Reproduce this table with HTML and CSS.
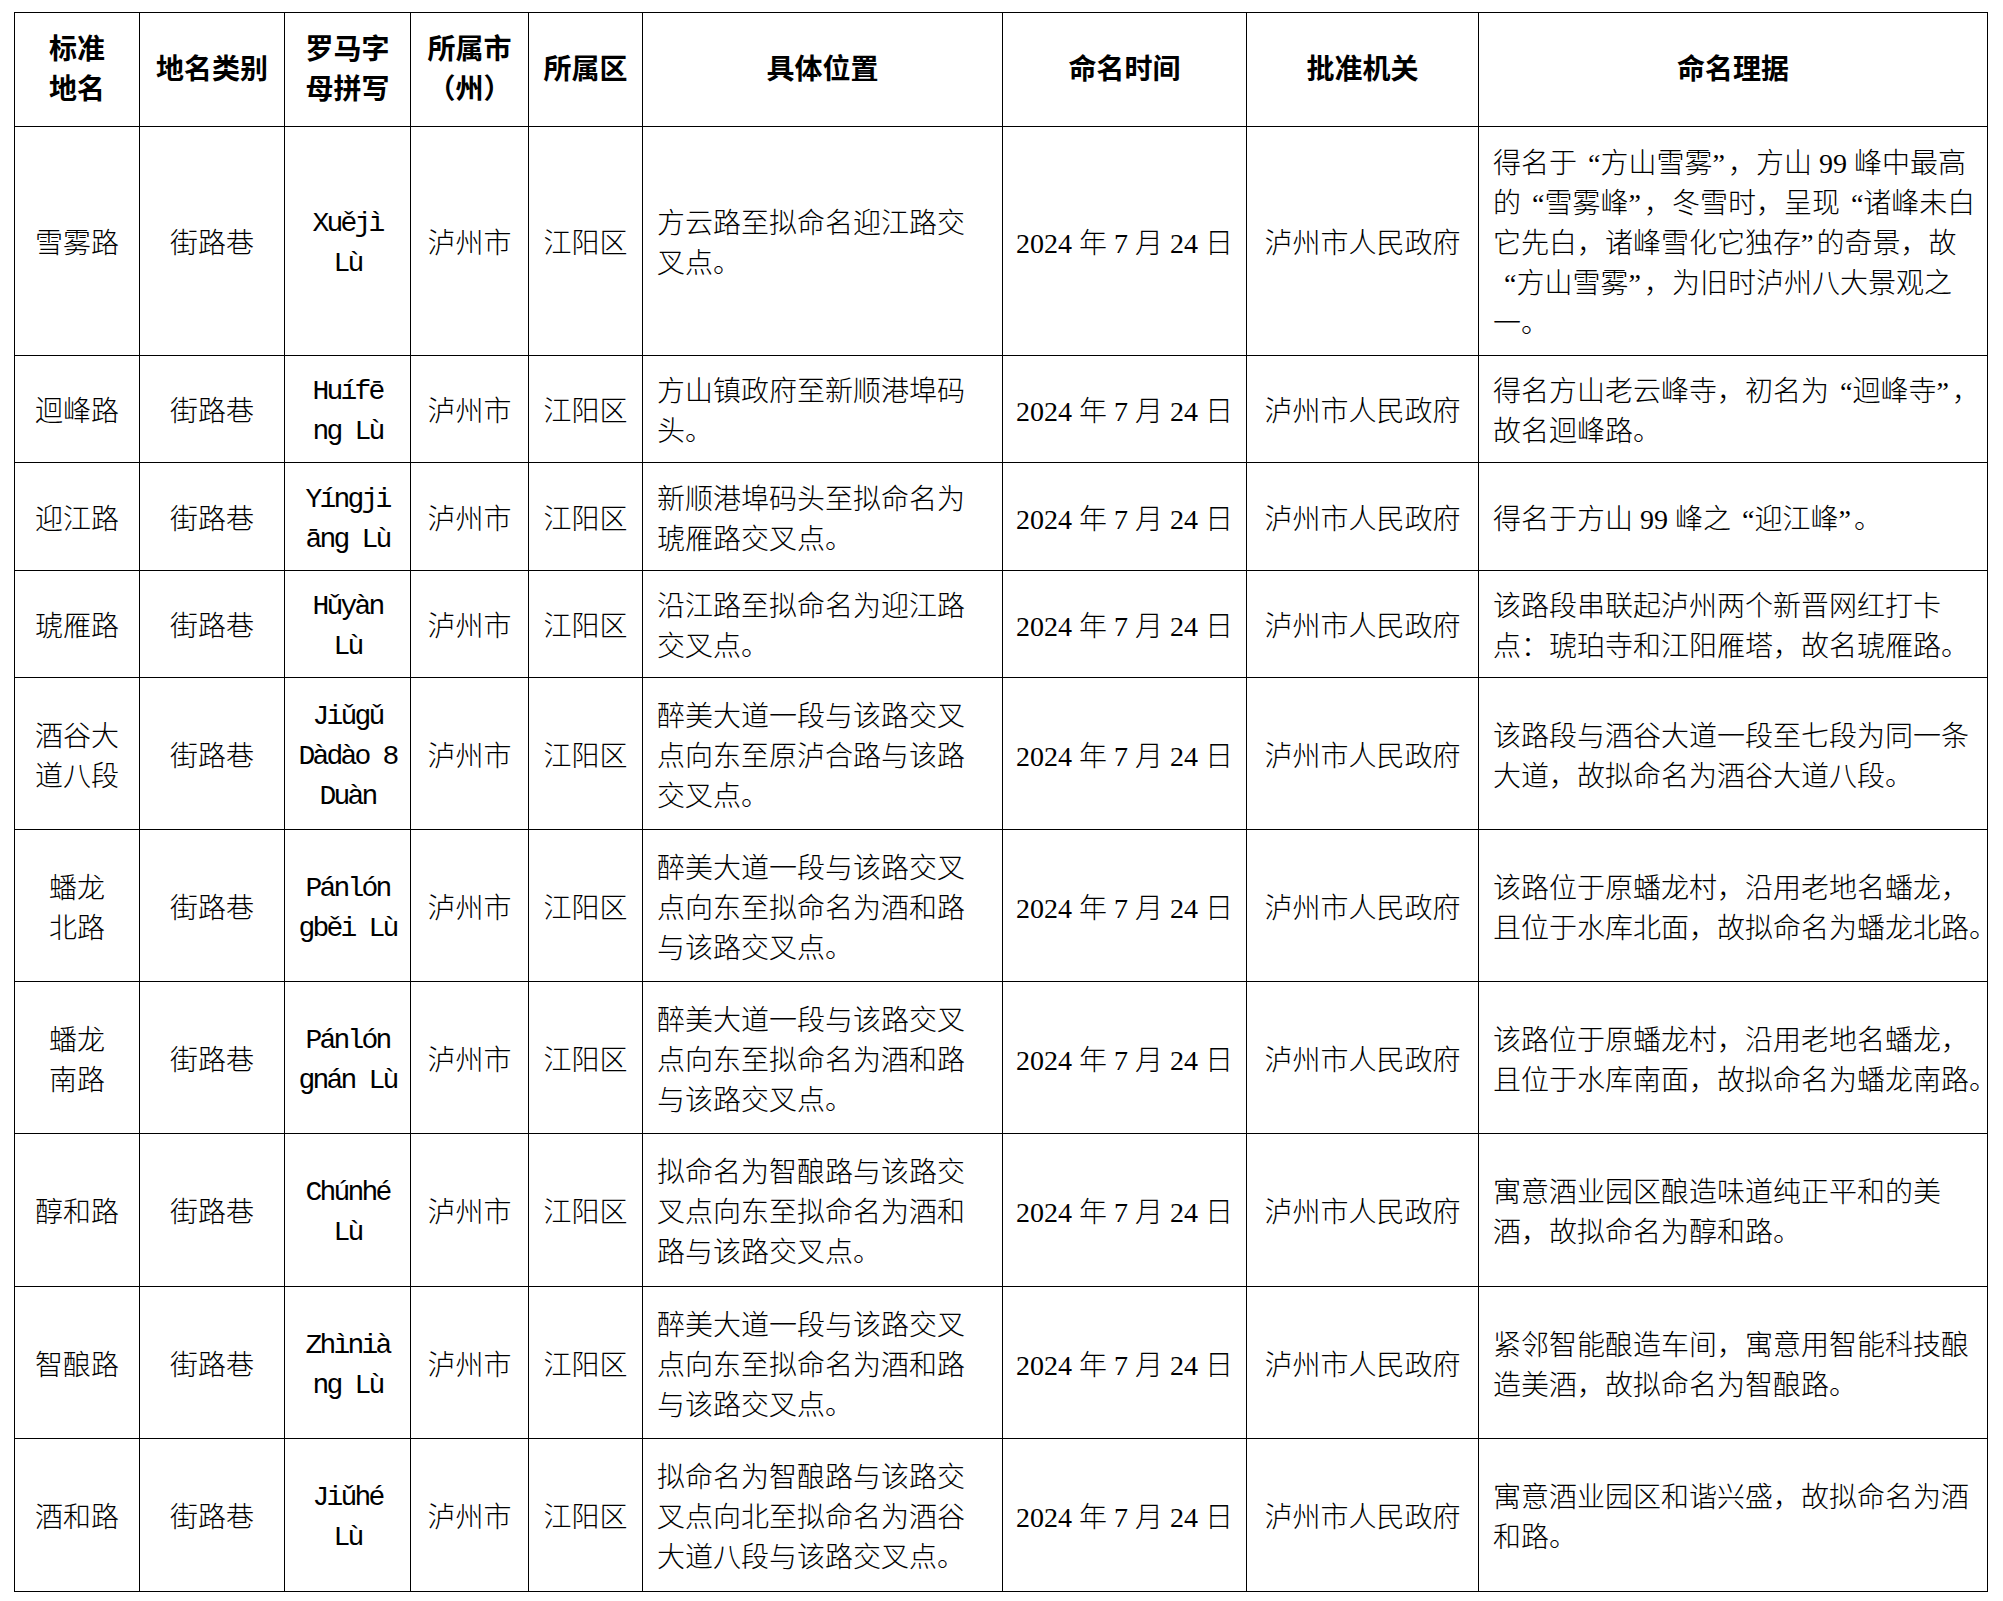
FILE: index.html
```html
<!DOCTYPE html>
<html lang="zh-CN">
<head>
<meta charset="utf-8">
<title>泸州市江阳区地名命名表</title>
<link rel="stylesheet" href="styles.css">
</head>
<body>
<div class="sheet">
  <div class="c h"><p>标准<br>地名</p></div>
  <div class="c h"><p>地名类别</p></div>
  <div class="c h"><p>罗马字<br>母拼写</p></div>
  <div class="c h"><p>所属市<br>（州）</p></div>
  <div class="c h"><p>所属区</p></div>
  <div class="c h"><p>具体位置</p></div>
  <div class="c h"><p>命名时间</p></div>
  <div class="c h"><p>批准机关</p></div>
  <div class="c h"><p>命名理据</p></div>

  <div class="c"><p>雪雾路</p></div>
  <div class="c"><p>街路巷</p></div>
  <div class="c py"><p>Xuějì<br>Lù</p></div>
  <div class="c"><p>泸州市</p></div>
  <div class="c"><p>江阳区</p></div>
  <div class="c l"><p>方云路至拟命名迎江路交<br>叉点。</p></div>
  <div class="c"><p>2024 年 7 月 24 日</p></div>
  <div class="c"><p>泸州市人民政府</p></div>
  <div class="c l"><p>得名于<span class="qo">“</span>方山雪雾<span class="qc">”</span>，方山 99 峰中最高<br>的<span class="qo">“</span>雪雾峰<span class="qc">”</span>，冬雪时，呈现<span class="qo">“</span>诸峰未白<br>它先白，诸峰雪化它独存<span class="qc">”</span>的奇景，故<br><span class="qo">“</span>方山雪雾<span class="qc">”</span>，为旧时泸州八大景观之<br>一。</p></div>

  <div class="c"><p>迴峰路</p></div>
  <div class="c"><p>街路巷</p></div>
  <div class="c py"><p>Huífē<br>ng Lù</p></div>
  <div class="c"><p>泸州市</p></div>
  <div class="c"><p>江阳区</p></div>
  <div class="c l"><p>方山镇政府至新顺港埠码<br>头。</p></div>
  <div class="c"><p>2024 年 7 月 24 日</p></div>
  <div class="c"><p>泸州市人民政府</p></div>
  <div class="c l"><p>得名方山老云峰寺，初名为<span class="qo">“</span>迴峰寺<span class="qc">”</span>，<br>故名迴峰路。</p></div>

  <div class="c"><p>迎江路</p></div>
  <div class="c"><p>街路巷</p></div>
  <div class="c py"><p>Yíngji<br>āng Lù</p></div>
  <div class="c"><p>泸州市</p></div>
  <div class="c"><p>江阳区</p></div>
  <div class="c l"><p>新顺港埠码头至拟命名为<br>琥雁路交叉点。</p></div>
  <div class="c"><p>2024 年 7 月 24 日</p></div>
  <div class="c"><p>泸州市人民政府</p></div>
  <div class="c l"><p>得名于方山 99 峰之<span class="qo">“</span>迎江峰<span class="qc">”</span>。</p></div>

  <div class="c"><p>琥雁路</p></div>
  <div class="c"><p>街路巷</p></div>
  <div class="c py"><p>Hǔyàn<br>Lù</p></div>
  <div class="c"><p>泸州市</p></div>
  <div class="c"><p>江阳区</p></div>
  <div class="c l"><p>沿江路至拟命名为迎江路<br>交叉点。</p></div>
  <div class="c"><p>2024 年 7 月 24 日</p></div>
  <div class="c"><p>泸州市人民政府</p></div>
  <div class="c l"><p>该路段串联起泸州两个新晋网红打卡<br>点：琥珀寺和江阳雁塔，故名琥雁路。</p></div>

  <div class="c"><p>酒谷大<br>道八段</p></div>
  <div class="c"><p>街路巷</p></div>
  <div class="c py"><p>Jiǔgǔ<br>Dàdào 8<br>Duàn</p></div>
  <div class="c"><p>泸州市</p></div>
  <div class="c"><p>江阳区</p></div>
  <div class="c l"><p>醉美大道一段与该路交叉<br>点向东至原泸合路与该路<br>交叉点。</p></div>
  <div class="c"><p>2024 年 7 月 24 日</p></div>
  <div class="c"><p>泸州市人民政府</p></div>
  <div class="c l"><p>该路段与酒谷大道一段至七段为同一条<br>大道，故拟命名为酒谷大道八段。</p></div>

  <div class="c"><p>蟠龙<br>北路</p></div>
  <div class="c"><p>街路巷</p></div>
  <div class="c py"><p>Pánlón<br>gběi Lù</p></div>
  <div class="c"><p>泸州市</p></div>
  <div class="c"><p>江阳区</p></div>
  <div class="c l"><p>醉美大道一段与该路交叉<br>点向东至拟命名为酒和路<br>与该路交叉点。</p></div>
  <div class="c"><p>2024 年 7 月 24 日</p></div>
  <div class="c"><p>泸州市人民政府</p></div>
  <div class="c l"><p>该路位于原蟠龙村，沿用老地名蟠龙，<br>且位于水库北面，故拟命名为蟠龙北路。</p></div>

  <div class="c"><p>蟠龙<br>南路</p></div>
  <div class="c"><p>街路巷</p></div>
  <div class="c py"><p>Pánlón<br>gnán Lù</p></div>
  <div class="c"><p>泸州市</p></div>
  <div class="c"><p>江阳区</p></div>
  <div class="c l"><p>醉美大道一段与该路交叉<br>点向东至拟命名为酒和路<br>与该路交叉点。</p></div>
  <div class="c"><p>2024 年 7 月 24 日</p></div>
  <div class="c"><p>泸州市人民政府</p></div>
  <div class="c l"><p>该路位于原蟠龙村，沿用老地名蟠龙，<br>且位于水库南面，故拟命名为蟠龙南路。</p></div>

  <div class="c"><p>醇和路</p></div>
  <div class="c"><p>街路巷</p></div>
  <div class="c py"><p>Chúnhé<br>Lù</p></div>
  <div class="c"><p>泸州市</p></div>
  <div class="c"><p>江阳区</p></div>
  <div class="c l"><p>拟命名为智酿路与该路交<br>叉点向东至拟命名为酒和<br>路与该路交叉点。</p></div>
  <div class="c"><p>2024 年 7 月 24 日</p></div>
  <div class="c"><p>泸州市人民政府</p></div>
  <div class="c l"><p>寓意酒业园区酿造味道纯正平和的美<br>酒，故拟命名为醇和路。</p></div>

  <div class="c"><p>智酿路</p></div>
  <div class="c"><p>街路巷</p></div>
  <div class="c py"><p>Zhìnià<br>ng Lù</p></div>
  <div class="c"><p>泸州市</p></div>
  <div class="c"><p>江阳区</p></div>
  <div class="c l"><p>醉美大道一段与该路交叉<br>点向东至拟命名为酒和路<br>与该路交叉点。</p></div>
  <div class="c"><p>2024 年 7 月 24 日</p></div>
  <div class="c"><p>泸州市人民政府</p></div>
  <div class="c l"><p>紧邻智能酿造车间，寓意用智能科技酿<br>造美酒，故拟命名为智酿路。</p></div>

  <div class="c"><p>酒和路</p></div>
  <div class="c"><p>街路巷</p></div>
  <div class="c py"><p>Jiǔhé<br>Lù</p></div>
  <div class="c"><p>泸州市</p></div>
  <div class="c"><p>江阳区</p></div>
  <div class="c l"><p>拟命名为智酿路与该路交<br>叉点向北至拟命名为酒谷<br>大道八段与该路交叉点。</p></div>
  <div class="c"><p>2024 年 7 月 24 日</p></div>
  <div class="c"><p>泸州市人民政府</p></div>
  <div class="c l"><p>寓意酒业园区和谐兴盛，故拟命名为酒<br>和路。</p></div>
</div>
</body>
</html>
```

FILE: styles.css
```css
html, body {
  margin: 0;
  padding: 0;
  background: #ffffff;
}

.sheet {
  display: grid;
  grid-template-columns: 124px 144px 125px 117px 113px 359px 243px 231px 508px;
  grid-template-rows: 113px 228px 106px 107px 106px 151px 151px 151px 152px 151px 152px;
  gap: 1px;
  padding: 1px;
  background: #000000;
  width: max-content;
  margin: 12px 0 0 14px;
}

.c {
  background: #ffffff;
  display: flex;
  flex-direction: column;
  justify-content: center;
  align-items: center;
  text-align: center;
  padding-top: 6px;
  font-family: "Liberation Serif", "Noto Sans CJK SC", serif;
  font-weight: 300;
  font-size: 28px;
  line-height: 40px;
  color: #000000;
  white-space: nowrap;
  overflow: visible;
}

.c p {
  margin: 0;
}

.c.l {
  align-items: flex-start;
  text-align: left;
  padding-left: 14px;
}

.c.h {
  padding-top: 0;
  padding-bottom: 5px;
  font-family: "Noto Sans CJK SC", sans-serif;
  font-weight: 700;
}

.c.py {
  font-family: "Liberation Mono", monospace;
  font-weight: 400;
  letter-spacing: -2.8px;
}

.qo {
  padding-left: 11px;
}

.qc {
  padding-right: 3px;
}
```
